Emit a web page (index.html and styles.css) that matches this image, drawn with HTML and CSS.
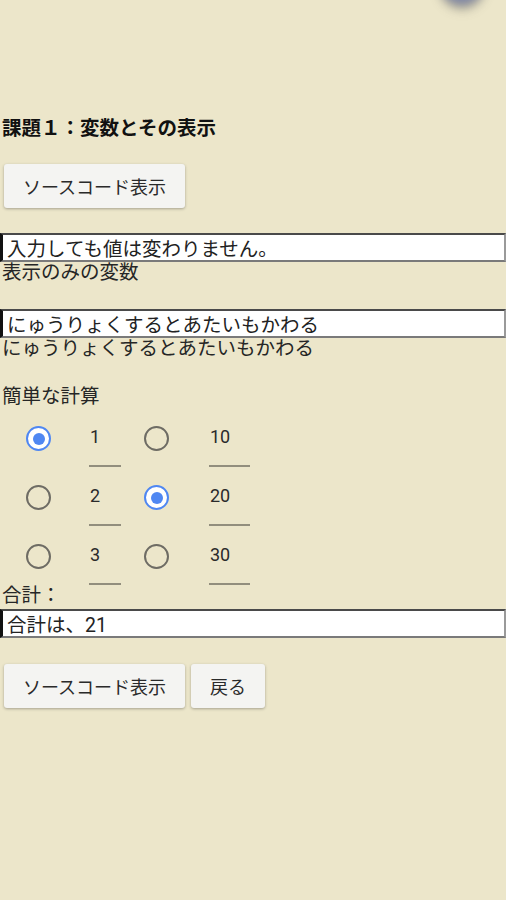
FILE: index.html
```html
<!DOCTYPE html>
<html lang="ja">
<head>
<meta charset="utf-8">
<title>課題1</title>
<link rel="stylesheet" href="styles.css">
</head>
<body>
<div class="fab"></div>
<main class="page">
  <h1 class="title">課題１：変数とその表示</h1>
  <div class="btnrow first"><button class="btn">ソースコード表示</button></div>
  <input class="field" type="text" value="入力しても値は変わりません。">
  <p class="label">表示のみの変数</p>
  <input class="field gap" type="text" value="にゅうりょくするとあたいもかわる">
  <p class="label">にゅうりょくするとあたいもかわる</p>
  <p class="label calc">簡単な計算</p>
  <div class="grid">
    <span class="radio on"></span><span class="num w1">1</span><span class="radio"></span><span class="num w2">10</span>
    <span class="radio"></span><span class="num w1">2</span><span class="radio on"></span><span class="num w2">20</span>
    <span class="radio"></span><span class="num w1">3</span><span class="radio"></span><span class="num w2">30</span>
  </div>
  <p class="label sum">合計：</p>
  <input class="field tight" type="text" value="合計は、21">
  <div class="btnrow last">
    <button class="btn">ソースコード表示</button>
    <button class="btn">戻る</button>
  </div>
</main>
</body>
</html>
```
FILE: styles.css
```css
html, body {
  margin: 0;
  padding: 0;
  background: #ece6ca;
}
body {
  font-family: "Roboto", "Noto Sans CJK JP", sans-serif;
  color: #262626;
  overflow: hidden;
  height: 900px;
  position: relative;
}
.fab {
  position: absolute;
  top: -40px;
  left: 440px;
  width: 44px;
  height: 44px;
  border-radius: 50%;
  background: #8088a8;
  box-shadow: 0 4px 6px rgba(70, 70, 70, 0.6);
  filter: blur(4px);
}
.page {
  display: flex;
  flex-direction: column;
  align-items: flex-start;
  padding-top: 116px;
}
.title {
  margin: 0;
  padding-left: 2px;
  font-size: 19.5px;
  line-height: 22px;
  font-weight: bold;
  color: #111;
  font-family: "Noto Sans CJK JP", sans-serif;
}
.btnrow {
  display: flex;
  gap: 6px;
  padding-left: 4px;
}
.btnrow.first { margin-top: 26px; }
.btnrow.last { margin-top: 26px; }
.btn {
  height: 44px;
  padding: 0 19px;
  border: none;
  border-radius: 3px;
  background: #f4f4f2;
  box-shadow: 0 1px 3px rgba(0, 0, 0, 0.3);
  font-family: "Roboto", "Noto Sans CJK JP", sans-serif;
  font-size: 18px;
  color: #2a2a2a;
}
.field {
  box-sizing: border-box;
  align-self: stretch;
  width: 506px;
  height: 29px;
  margin: 25px 0 0;
  padding: 0 0 0 4px;
  background: #fff;
  border-style: solid;
  border-width: 2px 2px 2px 3px;
  border-color: #4a4a4a #9a9a9a #7a7a7a #111;
  font-family: "Roboto", "Noto Sans CJK JP", sans-serif;
  font-size: 19.5px;
  color: #222;
  outline: none;
}
.field.tight { margin-top: 2px; }
.label {
  margin: 0;
  padding-left: 2px;
  font-size: 19.5px;
  line-height: 22px;
  color: #262626;
}
.label.calc { margin-top: 26px; }
.label.sum { margin-top: 0; }
.grid {
  display: grid;
  grid-template-columns: 25px 70px 48px 81px;
  grid-auto-rows: 59px;
  padding-left: 26px;
  align-items: start;
}
.radio {
  box-sizing: border-box;
  width: 25px;
  height: 25px;
  margin-top: 18px;
  justify-self: end;
  border: 2px solid #6e6c64;
  border-radius: 50%;
  display: flex;
  align-items: center;
  justify-content: center;
}
.radio.on {
  border-color: #4f87f2;
  background: #fff;
}
.radio.on::after {
  content: "";
  width: 12px;
  height: 12px;
  border-radius: 50%;
  background: #4f87f2;
}
.num {
  box-sizing: border-box;
  justify-self: end;
  height: 41px;
  margin-top: 18px;
  padding-left: 1px;
  font-size: 18px;
  line-height: 22px;
  color: #2a2a2a;
  border-bottom: 2px solid rgba(0, 0, 0, 0.38);
}
.num.w1 { width: 32px; }
.num.w2 { width: 41px; }
```
